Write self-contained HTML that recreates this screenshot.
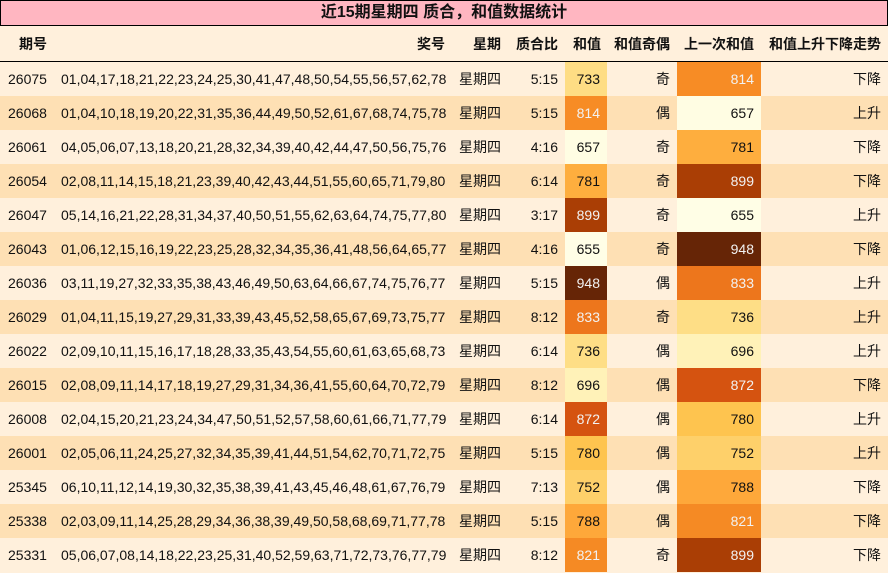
<!DOCTYPE html>
<html><head><meta charset="utf-8"><style>
body{margin:0;width:888px;height:573px;background:#fff0dc;font-family:"Liberation Sans","Noto Sans CJK SC",sans-serif;font-size:14px;color:#111;overflow:hidden}
.t{position:absolute;left:0;top:0;width:886px;height:24px;border:1px solid #000;background:#ffb6c1;text-align:center;font-weight:bold;font-size:16px;line-height:24px}
table{position:absolute;left:0;top:26px;border-collapse:collapse;table-layout:fixed;width:888px}
td,th{padding:0 7px 0 0;text-align:right;white-space:nowrap;overflow:hidden}
th{height:35px;border-bottom:1px solid #000;font-weight:bold}
td{height:34px}
tr.e td{background:#fee0b4}
td.q{text-align:left;padding-left:8px}
td.n{text-align:left;padding-left:6px}
td.w{text-align:center;padding:0}
.l{color:#f2f2f2}
</style></head><body>
<div class="t">近15期星期四 质合，和值数据统计</div>
<table>
<colgroup><col style="width:55px"><col style="width:397px"><col style="width:56px"><col style="width:57px"><col style="width:42px"><col style="width:70px"><col style="width:84px"><col style="width:127px"></colgroup>
<tr><th style="text-align:left;padding-left:19px">期号</th><th>奖号</th><th>星期</th><th>质合比</th><th style="padding-right:6px">和值</th><th>和值奇偶</th><th>上一次和值</th><th>和值上升下降走势</th></tr>
<tr><td class="q">26075</td><td class="n">01,04,17,18,21,22,23,24,25,30,41,47,48,50,54,55,56,57,62,78</td><td class="w">星期四</td><td>5:15</td><td style="background:#fedd84">733</td><td>奇</td><td class="l" style="background:#f78c25">814</td><td>下降</td></tr>
<tr class="e"><td class="q">26068</td><td class="n">01,04,10,18,19,20,22,31,35,36,44,49,50,52,61,67,68,74,75,78</td><td class="w">星期四</td><td>5:15</td><td class="l" style="background:#f78c25">814</td><td>偶</td><td style="background:#fffde3">657</td><td>上升</td></tr>
<tr><td class="q">26061</td><td class="n">04,05,06,07,13,18,20,21,28,32,34,39,40,42,44,47,50,56,75,76</td><td class="w">星期四</td><td>4:16</td><td style="background:#fffde3">657</td><td>奇</td><td style="background:#feae3e">781</td><td>下降</td></tr>
<tr class="e"><td class="q">26054</td><td class="n">02,08,11,14,15,18,21,23,39,40,42,43,44,51,55,60,65,71,79,80</td><td class="w">星期四</td><td>6:14</td><td style="background:#feae3e">781</td><td>奇</td><td class="l" style="background:#aa3e05">899</td><td>下降</td></tr>
<tr><td class="q">26047</td><td class="n">05,14,16,21,22,28,31,34,37,40,50,51,55,62,63,64,74,75,77,80</td><td class="w">星期四</td><td>3:17</td><td class="l" style="background:#aa3e05">899</td><td>奇</td><td style="background:#fffee6">655</td><td>上升</td></tr>
<tr class="e"><td class="q">26043</td><td class="n">01,06,12,15,16,19,22,23,25,28,32,34,35,36,41,48,56,64,65,77</td><td class="w">星期四</td><td>4:16</td><td style="background:#fffee6">655</td><td>奇</td><td class="l" style="background:#662506">948</td><td>下降</td></tr>
<tr><td class="q">26036</td><td class="n">03,11,19,27,32,33,35,38,43,46,49,50,63,64,66,67,74,75,76,77</td><td class="w">星期四</td><td>5:15</td><td class="l" style="background:#662506">948</td><td>偶</td><td class="l" style="background:#ed761c">833</td><td>上升</td></tr>
<tr class="e"><td class="q">26029</td><td class="n">01,04,11,15,19,27,29,31,33,39,43,45,52,58,65,67,69,73,75,77</td><td class="w">星期四</td><td>8:12</td><td class="l" style="background:#ed761c">833</td><td>奇</td><td style="background:#fede86">736</td><td>上升</td></tr>
<tr><td class="q">26022</td><td class="n">02,09,10,11,15,16,17,18,28,33,35,43,54,55,60,61,63,65,68,73</td><td class="w">星期四</td><td>6:14</td><td style="background:#fede86">736</td><td>偶</td><td style="background:#fff2b8">696</td><td>上升</td></tr>
<tr class="e"><td class="q">26015</td><td class="n">02,08,09,11,14,17,18,19,27,29,31,34,36,41,55,60,64,70,72,79</td><td class="w">星期四</td><td>8:12</td><td style="background:#fff2b8">696</td><td>偶</td><td class="l" style="background:#d55310">872</td><td>下降</td></tr>
<tr><td class="q">26008</td><td class="n">02,04,15,20,21,23,24,34,47,50,51,52,57,58,60,61,66,71,77,79</td><td class="w">星期四</td><td>6:14</td><td class="l" style="background:#d55310">872</td><td>偶</td><td style="background:#fec44f">780</td><td>上升</td></tr>
<tr class="e"><td class="q">26001</td><td class="n">02,05,06,11,24,25,27,32,34,35,39,41,44,51,54,62,70,71,72,75</td><td class="w">星期四</td><td>5:15</td><td style="background:#fec44f">780</td><td>偶</td><td style="background:#fed06a">752</td><td>上升</td></tr>
<tr><td class="q">25345</td><td class="n">06,10,11,12,14,19,30,32,35,38,39,41,43,45,46,48,61,67,76,79</td><td class="w">星期四</td><td>7:13</td><td style="background:#fed06a">752</td><td>偶</td><td style="background:#fea83a">788</td><td>下降</td></tr>
<tr class="e"><td class="q">25338</td><td class="n">02,03,09,11,14,25,28,29,34,36,38,39,49,50,58,68,69,71,77,78</td><td class="w">星期四</td><td>5:15</td><td style="background:#fea83a">788</td><td>偶</td><td class="l" style="background:#f58a24">821</td><td>下降</td></tr>
<tr><td class="q">25331</td><td class="n">05,06,07,08,14,18,22,23,25,31,40,52,59,63,71,72,73,76,77,79</td><td class="w">星期四</td><td>8:12</td><td class="l" style="background:#f58a24">821</td><td>奇</td><td class="l" style="background:#aa3e05">899</td><td>下降</td></tr>
</table>
</body></html>
